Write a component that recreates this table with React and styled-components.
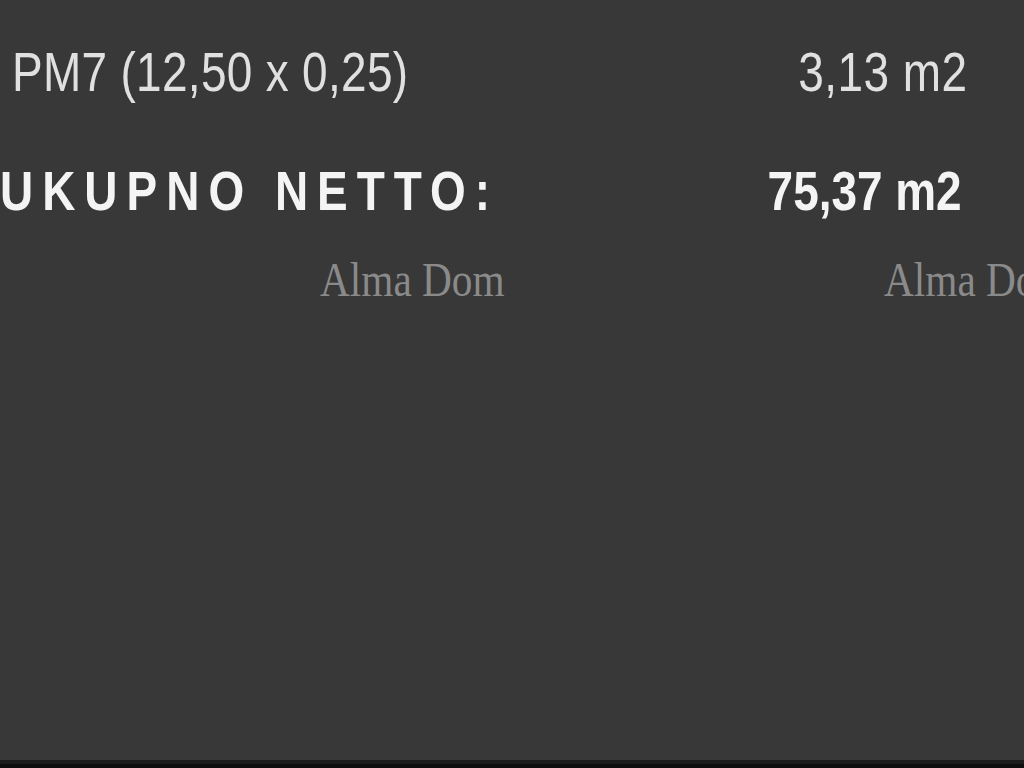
import React from "react";
import styled, { createGlobalStyle } from "styled-components";

const Global = createGlobalStyle`
  html, body { margin: 0; padding: 0; background: #383838; }
  #root { min-height: 100vh; }
`;

const Page = styled.div`
  display: flex;
  flex-direction: column;
  height: 768px;
  width: 1024px;
  overflow: hidden;
  background: #383838;
`;

const Content = styled.main`
  flex: 1;
  display: flex;
  flex-direction: column;
  padding-top: 40px;
`;

const Row = styled.div`
  display: flex;
  justify-content: space-between;
  align-items: baseline;
  height: 64px;
  line-height: 64px;
  font-family: "Liberation Sans", Arial, sans-serif;
  font-size: 56px;
  color: ${(p) => (p.$total ? "#f4f4f4" : "#e0e0e0")};
  font-weight: ${(p) => (p.$total ? 700 : 400)};
  padding-left: ${(p) => p.$left}px;
  padding-right: ${(p) => p.$right}px;
  margin-bottom: ${(p) => p.$after}px;
  white-space: nowrap;
`;

/* narrow (Arial Narrow-like) rendering of the condensed face */
const Label = styled.span`
  display: inline-block;
  letter-spacing: ${(p) => p.$spacing || 0}px;
  transform: scaleX(0.82);
  transform-origin: left center;
`;

const Value = styled.span`
  display: inline-block;
  letter-spacing: ${(p) => p.$spacing || 0}px;
  transform: scaleX(0.82);
  transform-origin: right center;
`;

const WatermarkRow = styled.div`
  display: flex;
  padding-left: 320px;
  height: 56px;
  line-height: 56px;
  white-space: nowrap;
`;

const Watermark = styled.span`
  flex: 0 0 564px;
  font-family: "Liberation Serif", "Times New Roman", serif;
  font-size: 48px;
  color: #8a8a8a;
  transform: scaleX(0.86);
  transform-origin: left center;
`;

const Footer = styled.footer`
  height: 8px;
  background: linear-gradient(#1c1c1c 0 4px, #0e0e0e 4px 8px);
`;

export default function App() {
  return (
    <>
      <Global />
      <Page>
        <Content>
          <Row $left={12} $right={56} $after={55}>
            <Label $spacing={0.4}>PM7 (12,50 x 0,25)</Label>
            <Value $spacing={0.6}>3,13 m2</Value>
          </Row>
          <Row $total $left={0} $right={62} $after={29}>
            <Label $spacing={11}>UKUPNO NETTO:</Label>
            <Value>75,37 m2</Value>
          </Row>
          <WatermarkRow>
            <Watermark>Alma Dom</Watermark>
            <Watermark>Alma Dom</Watermark>
          </WatermarkRow>
        </Content>
        <Footer />
      </Page>
    </>
  );
}
